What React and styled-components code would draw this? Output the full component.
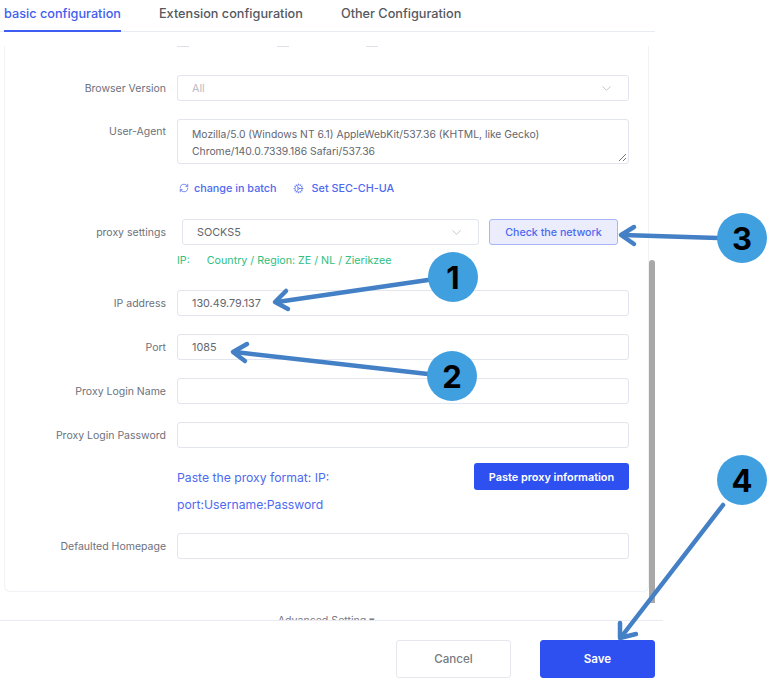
import React from 'react';
import styled, { createGlobalStyle } from 'styled-components';
import { ChevronDown, RefreshCw, Cog } from 'lucide-react';

const GlobalStyle = createGlobalStyle`
  html, body {
    margin: 0;
    padding: 0;
    background: #fff;
  }
  * {
    box-sizing: border-box;
  }
`;

const Page = styled.div`
  position: relative;
  width: 783px;
  height: 689px;
  overflow: hidden;
  background: #fff;
  font-family: Inter, "Liberation Sans", sans-serif;
`;

const Tabs = styled.div`
  display: flex;
  gap: 38px;
  width: 655px;
  height: 32px;
  padding-left: 4px;
  border-bottom: 1px solid #e9ebf3;
`;

const Tab = styled.div`
  height: 32px;
  padding-top: 6px;
  font-size: 12.7px;
  font-weight: 500;
  line-height: 16px;
  color: ${p => (p.$active ? '#3f5df0' : '#555860')};
  border-bottom: 2px solid ${p => (p.$active ? '#3f5df0' : 'transparent')};
`;

const Body = styled.div`
  display: flex;
  width: 663px;
  height: 574px;
  margin-top: 14px;
  padding-left: 4px;
  overflow: hidden;
`;

const Column = styled.div`
  width: 645px;
  flex: none;
`;

const Card = styled.div`
  height: 546px;
  padding-right: 19px;
  border: 1px solid #f1f2f6;
  border-top: none;
  border-radius: 0 0 6px 6px;
`;

const Stubs = styled.div`
  display: flex;
  height: 29px;
  padding-left: 172px;
`;

const Stub = styled.span`
  width: 12px;
  height: 1px;
  margin-right: ${p => p.$gap}px;
  background: #dfe1e8;
`;

const Row = styled.div`
  display: flex;
  align-items: ${p => (p.$top ? 'flex-start' : 'center')};
  margin-bottom: ${p => p.$mb ?? 18}px;
`;

const Label = styled.div`
  width: 161px;
  flex: none;
  margin-right: 11px;
  padding-top: ${p => (p.$top ? '5px' : '2px')};
  font-size: 10.5px;
  line-height: 16px;
  text-align: right;
  color: #6d717c;
`;

const Field = styled.div`
  display: flex;
  align-items: center;
  justify-content: space-between;
  flex: ${p => (p.$width ? 'none' : 1)};
  width: ${p => (p.$width ? `${p.$width}px` : 'auto')};
  height: 26px;
  margin-left: ${p => p.$ml ?? 0}px;
  padding: 1px 14px 0;
  border: 1px solid #e2e4ee;
  border-radius: 3px;
  font-size: 10.8px;
  color: ${p => (p.$muted ? '#b9bcc5' : '#63666f')};
`;

const Agent = styled.div`
  position: relative;
  flex: 1;
  height: 45px;
  padding: 6px 14px;
  border: 1px solid #e2e4ee;
  border-radius: 3px;
  font-size: 10.35px;
  line-height: 17px;
  color: #63666f;
`;

const Grip = styled.svg`
  position: absolute;
  right: 1px;
  bottom: 1px;
`;

const Links = styled.div`
  display: flex;
  align-items: center;
  height: 16px;
  margin: 0 0 23px 174px;
`;

const TextLink = styled.span`
  display: inline-flex;
  align-items: center;
  gap: ${p => p.$gap}px;
  margin-right: 16px;
  font-size: 10.8px;
  font-weight: 500;
  color: #4d69f0;
`;

const CheckButton = styled.div`
  display: flex;
  align-items: center;
  justify-content: center;
  width: 129px;
  height: 26px;
  margin-left: 10px;
  padding-top: 1px;
  border: 1px solid #a9b5fa;
  border-radius: 3px;
  background: #ebedfd;
  font-size: 10.7px;
  font-weight: 500;
  color: #4d69f0;
`;

const Status = styled.div`
  display: flex;
  gap: 17px;
  height: 16px;
  margin: -10px 0 21px 172px;
  font-size: 10.7px;
  line-height: 16px;
  color: #2fc07f;
`;

const Paste = styled.div`
  display: flex;
  justify-content: space-between;
  margin: -4px 0 15px 172px;
`;

const PasteHint = styled.div`
  width: 190px;
  padding-top: 2px;
  font-size: 12.2px;
  line-height: 27px;
  color: #4d69f0;
`;

const PasteButton = styled.div`
  display: flex;
  align-items: center;
  justify-content: center;
  width: 155px;
  height: 27px;
  margin-top: 1px;
  border-radius: 3px;
  background: #2f50f0;
  font-size: 10.9px;
  font-weight: 600;
  color: #fff;
`;

const Advanced = styled.div`
  margin-top: 21px;
  font-size: 10.6px;
  line-height: 16px;
  text-align: center;
  color: #777a84;
`;

const Track = styled.div`
  flex: none;
  padding-top: 214px;
`;

const Thumb = styled.div`
  width: 6px;
  height: 343px;
  border-radius: 3px 3px 0 0;
  background: #a8a8a8;
`;

const Footer = styled.div`
  display: flex;
  justify-content: flex-end;
  gap: 29px;
  width: 663px;
  padding: 19px 8px 0 0;
  border-top: 1px solid #e9ebf3;
`;

const FooterButton = styled.div`
  display: flex;
  align-items: center;
  justify-content: center;
  width: 115px;
  height: 38px;
  border: 1px solid ${p => (p.$primary ? '#2f50f0' : '#e6e7ec')};
  border-radius: 3px;
  background: ${p => (p.$primary ? '#2f50f0' : '#fff')};
  font-size: 11.6px;
  font-weight: ${p => (p.$primary ? 600 : 500)};
  color: ${p => (p.$primary ? '#fff' : '#777a80')};
`;

const Arrows = styled.svg`
  position: absolute;
  left: 0;
  top: 0;
  pointer-events: none;
`;

const Badge = styled.div`
  position: absolute;
  left: ${p => p.$x - 25}px;
  top: ${p => p.$y - 25}px;
  display: flex;
  align-items: center;
  justify-content: center;
  width: 50px;
  height: 50px;
  border-radius: 50%;
  background: #3f9fdf;
  font-family: Inter, "Liberation Sans", sans-serif;
  font-size: 31px;
  font-weight: 700;
  color: #000;
`;

const arrows = [
  { line: '428,280 277,302', head: '286,291 275,302 288,309' },
  { line: '428,374 235,352', head: '247,344 233,352 245,361' },
  { line: '718,238 623,235', head: '634,227 621,235 634,244' },
  { line: '723,505 622,636', head: '620,623 620,638 636,634' },
];

const badges = [
  { n: 1, x: 453, y: 277 },
  { n: 2, x: 452, y: 376 },
  { n: 3, x: 742, y: 238 },
  { n: 4, x: 742, y: 480 },
];

const App = () => (
  <Page>
    <GlobalStyle />
    <Tabs>
      <Tab $active>basic configuration</Tab>
      <Tab>Extension configuration</Tab>
      <Tab>Other Configuration</Tab>
    </Tabs>
    <Body>
      <Column>
        <Card>
          <Stubs>
            <Stub $gap={88} />
            <Stub $gap={77} />
            <Stub $gap={0} />
          </Stubs>
          <Row>
            <Label>Browser Version</Label>
            <Field $muted>
              All
              <ChevronDown size={15} color="#c3c5cc" strokeWidth={1.5} />
            </Field>
          </Row>
          <Row $top $mb={16}>
            <Label $top>User-Agent</Label>
            <Agent>
              Mozilla/5.0 (Windows NT 6.1) AppleWebKit/537.36 (KHTML, like Gecko)
              <br />
              Chrome/140.0.7339.186 Safari/537.36
              <Grip width="10" height="10" viewBox="0 0 10 10">
                <path d="M9 2 2 9M9 6 6 9" stroke="#777" strokeWidth="1" fill="none" />
              </Grip>
            </Agent>
          </Row>
          <Links>
            <TextLink $gap={5}>
              <RefreshCw size={10} strokeWidth={1.8} />
              change in batch
            </TextLink>
            <TextLink $gap={8}>
              <Cog size={11} strokeWidth={1.4} />
              Set SEC-CH-UA
            </TextLink>
          </Links>
          <Row>
            <Label>proxy settings</Label>
            <Field $width={297} $ml={5}>
              SOCKS5
              <ChevronDown size={15} color="#c3c5cc" strokeWidth={1.5} />
            </Field>
            <CheckButton>Check the network</CheckButton>
          </Row>
          <Status>
            <span>IP:</span>
            <span>Country / Region: ZE / NL / Zierikzee</span>
          </Status>
          <Row>
            <Label>IP address</Label>
            <Field>130.49.79.137</Field>
          </Row>
          <Row>
            <Label>Port</Label>
            <Field>1085</Field>
          </Row>
          <Row>
            <Label>Proxy Login Name</Label>
            <Field />
          </Row>
          <Row>
            <Label>Proxy Login Password</Label>
            <Field />
          </Row>
          <Paste>
            <PasteHint>Paste the proxy format: IP: port:Username:Password</PasteHint>
            <PasteButton>Paste proxy information</PasteButton>
          </Paste>
          <Row $mb={0}>
            <Label>Defaulted Homepage</Label>
            <Field />
          </Row>
        </Card>
        <Advanced>Advanced Setting ▾</Advanced>
      </Column>
      <Track>
        <Thumb />
      </Track>
    </Body>
    <Footer>
      <FooterButton>Cancel</FooterButton>
      <FooterButton $primary>Save</FooterButton>
    </Footer>
    <Arrows width="783" height="689" viewBox="0 0 783 689">
      {arrows.map(a => (
        <g key={a.line} fill="none" stroke="#4480c5" strokeWidth="4.5" strokeLinejoin="round" strokeLinecap="round">
          <polyline points={a.line} />
          <polyline points={a.head} />
        </g>
      ))}
    </Arrows>
    {badges.map(b => (
      <Badge key={b.n} $x={b.x} $y={b.y}>{b.n}</Badge>
    ))}
  </Page>
);

export default App;
